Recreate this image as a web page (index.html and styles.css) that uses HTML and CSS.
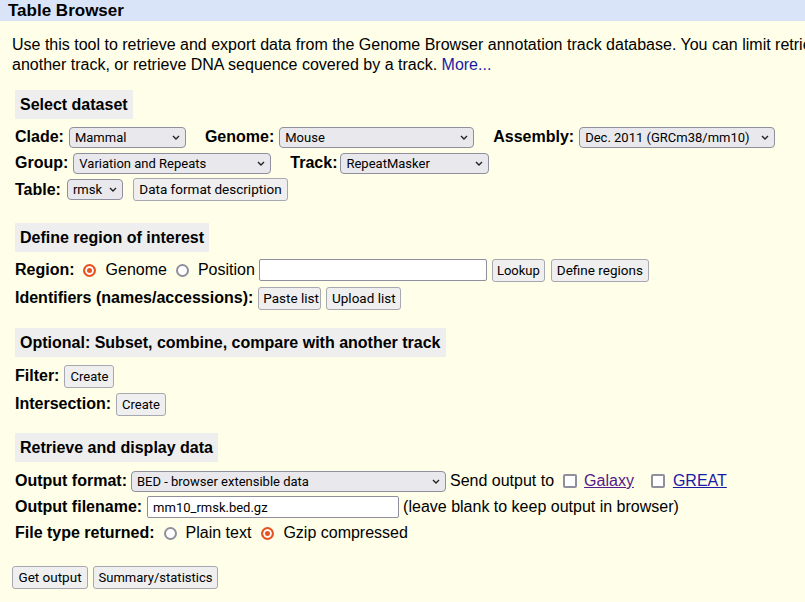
FILE: index.html
```html
<!DOCTYPE html>
<html>
<head>
<meta charset="utf-8">
<title>Table Browser</title>
<link rel="stylesheet" href="styles.css">
</head>
<body>
<div class="titlebar">Table Browser</div>
<div class="page">
  <p class="intro">Use this tool to retrieve and export data from the Genome Browser annotation track database. You can limit retrieval based on data attributes and intersect or merge with data from<br>another track, or retrieve DNA sequence covered by a track. <a class="more" href="#">More...</a></p>

  <section class="sec sec-dataset">
    <h2 class="sec-title">Select dataset</h2>
    <div class="row">
      <span class="lbl">Clade:</span>
      <span class="sel-wrap w-clade"><select class="sel"><option>Mammal</option></select><svg class="chev" viewBox="0 0 8 5"><path d="M1 1 L4 4 L7 1"/></svg></span>
      <span class="lbl grp">Genome:</span>
      <span class="sel-wrap w-genome"><select class="sel"><option>Mouse</option></select><svg class="chev" viewBox="0 0 8 5"><path d="M1 1 L4 4 L7 1"/></svg></span>
      <span class="lbl grp">Assembly:</span>
      <span class="sel-wrap w-assembly"><select class="sel"><option>Dec. 2011 (GRCm38/mm10)</option></select><svg class="chev" viewBox="0 0 8 5"><path d="M1 1 L4 4 L7 1"/></svg></span>
    </div>
    <div class="row">
      <span class="lbl">Group:</span>
      <span class="sel-wrap w-group"><select class="sel"><option>Variation and Repeats</option></select><svg class="chev" viewBox="0 0 8 5"><path d="M1 1 L4 4 L7 1"/></svg></span>
      <span class="lbl grp lbl-track">Track:</span>
      <span class="sel-wrap w-track"><select class="sel"><option>RepeatMasker</option></select><svg class="chev" viewBox="0 0 8 5"><path d="M1 1 L4 4 L7 1"/></svg></span>
    </div>
    <div class="row row-table">
      <span class="lbl lbl-table">Table:</span>
      <span class="sel-wrap w-table"><select class="sel"><option>rmsk</option></select><svg class="chev" viewBox="0 0 8 5"><path d="M1 1 L4 4 L7 1"/></svg></span>
      <button class="btn btn-desc">Data format description</button>
    </div>
  </section>

  <section class="sec sec-region">
    <h2 class="sec-title">Define region of interest</h2>
    <div class="row row-tall">
      <span class="lbl lbl-region">Region:</span>
      <label class="opt opt-first"><input class="radio" type="radio" name="region" checked><span>Genome</span></label>
      <label class="opt opt-last"><input class="radio" type="radio" name="region"><span>Position</span></label>
      <input class="txt w-pos" type="text">
      <button class="btn btn-lookup">Lookup</button>
      <button class="btn btn-define">Define regions</button>
    </div>
    <div class="row row-tall">
      <span class="lbl">Identifiers (names/accessions):</span>
      <button class="btn btn-paste">Paste list</button>
      <button class="btn btn-upload">Upload list</button>
    </div>
  </section>

  <section class="sec sec-optional">
    <h2 class="sec-title">Optional: Subset, combine, compare with another track</h2>
    <div class="row row-tall">
      <span class="lbl">Filter:</span>
      <button class="btn btn-create">Create</button>
    </div>
    <div class="row row-tall">
      <span class="lbl">Intersection:</span>
      <button class="btn btn-create">Create</button>
    </div>
  </section>

  <section class="sec sec-retrieve">
    <h2 class="sec-title">Retrieve and display data</h2>
    <div class="row">
      <span class="lbl lbl-format">Output format:</span>
      <span class="sel-wrap w-format"><select class="sel"><option>BED - browser extensible data</option></select><svg class="chev" viewBox="0 0 8 5"><path d="M1 1 L4 4 L7 1"/></svg></span>
      <span class="plain send">Send output to</span>
      <input class="check" type="checkbox">
      <a class="link visited" href="#">Galaxy</a>
      <input class="check check-great" type="checkbox">
      <a class="link" href="#">GREAT</a>
    </div>
    <div class="row">
      <span class="lbl">Output filename:</span>
      <input class="txt w-file" type="text" value="mm10_rmsk.bed.gz">
      <span class="plain note">(leave blank to keep output in browser)</span>
    </div>
    <div class="row">
      <span class="lbl lbl-ftype">File type returned:</span>
      <label class="opt"><input class="radio" type="radio" name="ftype"><span>Plain text</span></label>
      <label class="opt"><input class="radio" type="radio" name="ftype" checked><span>Gzip compressed</span></label>
    </div>
  </section>

  <div class="actions">
    <button class="btn btn-get">Get output</button>
    <button class="btn btn-summary">Summary/statistics</button>
  </div>
</div>
</body>
</html>
```

FILE: styles.css
```css
html, body {
  margin: 0;
  padding: 0;
}
body {
  background: #fffee8;
  color: #000;
  font-family: "Liberation Sans", Arial, sans-serif;
  font-size: 16px;
  overflow: hidden;
  width: 805px;
  height: 602px;
}
.titlebar {
  background: #d9e4f8;
  height: 21px;
  line-height: 22px;
  padding-left: 8px;
  font-weight: bold;
  font-size: 17px;
}
.page {
  padding: 0 0 0 12px;
}
.intro {
  margin: 14px 0 0 0;
  line-height: 20px;
  white-space: nowrap;
}
.more {
  color: #1a1aa6;
  text-decoration: none;
}
.sec {
  padding-left: 3px;
}
.sec-title {
  display: inline-block;
  margin: 0;
  background: #eeeeee;
  font-size: 16px;
  font-weight: bold;
  height: 29px;
  line-height: 29px;
  padding: 0 5px;
  vertical-align: top;
}
.sec-dataset { margin-top: 15px; }
.sec-region { margin-top: 20px; }
.sec-optional { margin-top: 16px; }
.sec-retrieve { margin-top: 15px; }

.row {
  display: flex;
  align-items: center;
  height: 26px;
  white-space: nowrap;
}
.row-table { height: 27px; }
.sec-dataset .sec-title { margin-bottom: 5px; }
.sec-retrieve .sec-title { margin-bottom: 6px; }
.sec-region .sec-title { margin-bottom: 4px; }
.sec-optional .sec-title { margin-bottom: 5px; }
.row-tall { height: 28px; }

.lbl {
  font-weight: bold;
  margin-right: 5px;
}
.grp { margin-left: 19px; }
.lbl-track { margin-right: 3px; }
.lbl-table { margin-right: 6px; }
.lbl-region { margin-right: 8px; }
.lbl-ftype { margin-right: 9px; }
.lbl-format { margin-right: 4px; }
.plain { margin: 0 4px; }
.send { margin-left: 4px; margin-right: 9px; }
.note { margin-left: 0; }

.sel-wrap {
  position: relative;
  display: inline-flex;
}
.sel {
  appearance: none;
  -webkit-appearance: none;
  margin: 0;
  height: 21px;
  width: 100%;
  border: 1px solid #8f8f9d;
  border-radius: 4px;
  background: #e9e9ed;
  color: #000;
  font-family: Roboto, "Noto Sans", sans-serif;
  font-size: 13px;
  padding: 0 18px 0 5px;
  line-height: 19px;
}
.chev {
  position: absolute;
  right: 6px;
  top: 8px;
  width: 8px;
  height: 5px;
  fill: none;
  stroke: #222;
  stroke-width: 1.4;
  pointer-events: none;
}
.w-clade { width: 117px; }
.w-genome { width: 195px; }
.w-assembly { width: 196px; }
.w-group { width: 198px; }
.w-track { width: 149px; }
.w-table { width: 56px; }
.w-format { width: 315px; }

.btn {
  margin: 0 5px 0 0;
  height: 23px;
  box-sizing: border-box;
  border: 1px solid #a8a8b0;
  border-radius: 3px;
  background: #efeff0;
  color: #000;
  font-family: Roboto, "Noto Sans", sans-serif;
  font-size: 13px;
  padding: 0 4px;
  line-height: 21px;
  text-align: center;
}
.btn-desc { margin-left: 10px; width: 155px; font-size: 13.5px; }
.btn-lookup { margin-right: 6px; width: 53px; }
.btn-define { width: 98px; font-size: 13.5px; }
.btn-paste { width: 63px; font-size: 13.5px; }
.btn-upload { width: 75px; font-size: 13.5px; }
.btn-create { width: 50px; }
.btn-get { width: 76px; font-size: 13.5px; }
.btn-summary { width: 125px; }

.txt {
  margin: 0 5px 0 0;
  height: 22px;
  box-sizing: border-box;
  border: 1px solid #8f8f9d;
  border-radius: 2px;
  background: #fff;
  font-family: Roboto, "Noto Sans", sans-serif;
  font-size: 13px;
  padding: 0 5px;
  color: #000;
}
.w-pos { width: 228px; }
.w-file { width: 252px; margin-right: 4px; }

.opt {
  display: inline-flex;
  align-items: center;
  margin-right: 10px;
}
.opt-first { margin-right: 9px; }
.opt-first .radio { margin-right: 10px; }
.opt-last { margin-right: 4px; }
.radio {
  appearance: none;
  -webkit-appearance: none;
  width: 13px;
  height: 13px;
  margin: 0 9px 0 0;
  border: 2px solid #8f8f9d;
  border-radius: 50%;
  background: #fff;
  box-sizing: border-box;
}
.radio:checked {
  border-color: #e9531f;
  background: #e9531f;
  box-shadow: inset 0 0 0 2px #fff;
}
.check {
  appearance: none;
  -webkit-appearance: none;
  width: 14px;
  height: 14px;
  margin: 0 7px 0 0;
  border: 2px solid #8f8f9d;
  border-radius: 2px;
  background: #fff;
  box-sizing: border-box;
}
.check-great { margin-left: 17px; margin-right: 8px; }
.link {
  color: #1a1aa6;
  text-decoration: underline;
}
.link.visited { color: #551a8b; }

.actions {
  display: flex;
  margin-top: 20px;
}
```
